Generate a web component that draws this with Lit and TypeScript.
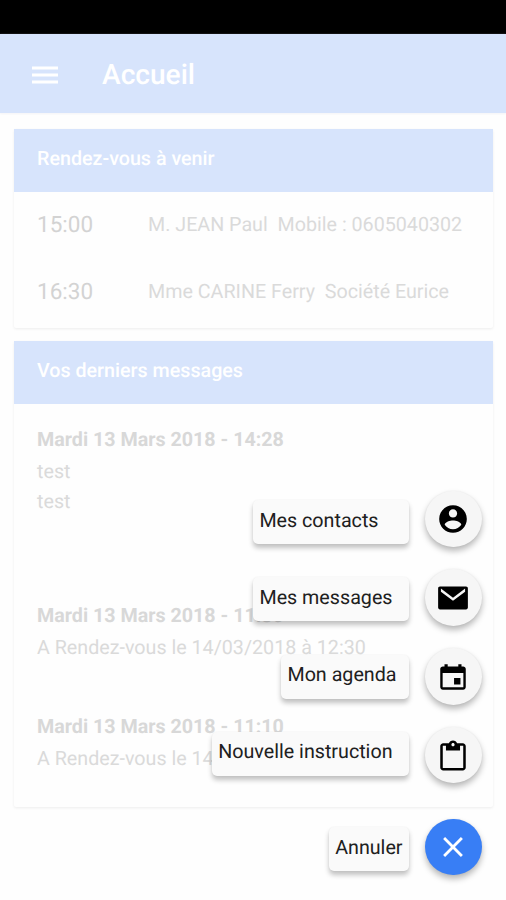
import { LitElement, html, css, svg } from "lit";
import { customElement } from "lit/decorators.js";
import { classMap } from "lit/directives/class-map.js";

const icons = {
  contact: svg`<path d="M256 48C140.6 48 48 141.600 48 256s92.600 208 208 208 208-93.600 208-208S371.400 48 256 48zm0 62.400c34.300 0 62.400 28.100 62.400 62.400s-28.100 62.400-62.400 62.400-62.400-28.100-62.400-62.400 28.100-62.400 62.400-62.400zm0 300.400c-51.600 0-97.900-26.700-124.800-67.100 1-41.600 83.200-64.400 124.800-64.400s123.800 22.800 124.800 64.400c-26.900 40.400-73.200 67.100-124.800 67.100z"/>`,
  mail: svg`<path d="M452 84H60C44 84 32 96 32 112v288c0 16 12 28 28 28h392c16 0 28-12 28-28V112c0-16-12-28-28-28zM438 160L256 298 74 160V114l182 138 182-138v46z"/>`,
  agenda: svg`<path d="M368 272h-96v96h96v-96zM336 64v32H176V64h-48v32h-24c-22 0-40 18-40 40v272c0 22 18 40 40 40h304c22 0 40-18 40-40V136c0-22-18-40-40-40h-24V64h-48zm76 348H100V194h312v218z"/>`,
  clipboard: svg`<path d="M403 64h-85.400C310 42.200 285.500 24 256 24s-54 18.200-61.600 40H109c-24.700 0-45 20.300-45 45v322c0 24.800 20.300 45 45 45h294c24.700 0 45-20.200 45-45V109c0-24.700-20.300-45-45-45zM256 62c13.200 0 24 10.700 24 24s-10.800 24-24 24-24-10.700-24-24 10.800-24 24-24zm154 376H102V102h48v72h212v-72h48v336z"/>`,
  close: svg`<path d="M405 136.798L375.202 107 256 226.202 136.798 107 107 136.798 226.202 256 107 375.202 136.798 405 256 285.798 375.202 405 405 375.202 285.798 256z"/>`,
  menu: svg`<path d="M60 384h392v-44H60V384zm0-106h392v-44H60v44zM60 128v44h392v-44H60z"/>`,
};
const icon = (shape: unknown) => html`<svg viewBox="0 0 512 512">${shape}</svg>`;

const meetings = [
  { time: "15:00", who: "M. JEAN Paul\u00a0 Mobile : 0605040302" },
  { time: "16:30", who: "Mme CARINE Ferry\u00a0 Société Eurice" },
];
const messages = [
  { date: "Mardi 13 Mars 2018 - 14:28", lines: ["test", "test"] },
  { date: "Mardi 13 Mars 2018 - 11:30", lines: ["A Rendez-vous le 14/03/2018 à 12:30"] },
  { date: "Mardi 13 Mars 2018 - 11:10", lines: ["A Rendez-vous le 14/03/2018 à 12:30"] },
];
const actions = [
  { label: "Mes contacts", shape: icons.contact, wide: true },
  { label: "Mes messages", shape: icons.mail },
  { label: "Mon agenda", shape: icons.agenda, tight: true },
  { label: "Nouvelle instruction", shape: icons.clipboard },
];

@customElement("app-root")
export class AppRoot extends LitElement {
  static styles = css`
    :host {
      display: block;
      position: relative;
      box-sizing: border-box;
      height: 900px;
      overflow: hidden;
      background: #fefefe;
      font-family: Roboto, sans-serif;
      font-size: 19.7px;
      line-height: 30px;
      color: #dadada;
      text-rendering: geometricPrecision;
      white-space: nowrap;
    }
    svg { display: block; width: 34px; height: 34px; fill: currentColor; }
    .status { height: 34px; background: #000; }
    .bar {
      display: flex;
      align-items: center;
      gap: 40px;
      height: 79px;
      padding-left: 28px;
      background: #d7e4fc;
      color: #fff;
      box-shadow: 0 1px 2px #f3f3f6;
    }
    .bar svg { margin-top: 2px; }
    .title { font-size: 28.1px; font-weight: 500; padding-top: 2px; }
    .content { display: flex; flex-direction: column; gap: 13px; padding: 16px 13px 0 14px; }
    .card { border-radius: 2px; background: #fefefe; box-shadow: 0 1px 3px #ededed; }
    .head {
      box-sizing: border-box;
      height: 63px;
      padding: 15px 23px;
      background: #d7e4fc;
      color: #fff;
      font-weight: 500;
    }
    .meetings { height: 136px; }
    .meeting { display: flex; height: 67.4px; padding: 17.5px 23px 0; box-sizing: border-box; }
    .time { width: 111px; font-size: 22.5px; color: #d3d3d3; }
    .messages { height: 403px; box-sizing: border-box; padding: 21px 23px 0; }
    .message { height: 111px; }
    .message:first-child { height: 176px; }
    .date { font-weight: 700; margin-bottom: 2px; color: #d8d8d8; }
    .actions {
      position: absolute;
      right: 24.5px;
      top: 490.5px;
      display: flex;
      gap: 16.4px;
      color: #202020;
    }
    .labels, .buttons { display: flex; flex-direction: column; align-items: flex-end; }
    .labels { gap: 33.3px; padding-top: 9.5px; }
    .buttons { gap: 22.2px; }
    .label {
      box-sizing: border-box;
      height: 44px;
      padding: 5.6px 16px 0 6px;
      border-radius: 5px;
      background: #fafafa;
      box-shadow: 0 4px 5px rgba(0, 0, 0, 0.24), 0 0 2px rgba(0, 0, 0, 0.06);
    }
    .label.wide { padding-right: 30px; }
    .label.tight { padding-right: 12px; }
    .label.cancel { padding-right: 6px; margin-top: 18px; }
    .button {
      display: grid;
      place-items: center;
      width: 56.6px;
      height: 56.6px;
      border-radius: 50%;
      background: #f6f6f6;
      color: #000;
      box-shadow: 0 4px 6px rgba(0, 0, 0, 0.28), 0 0 2px rgba(0, 0, 0, 0.06);
    }
    .button svg { margin-top: 1px; }
    .button.cancel { margin-top: 13px; background: #387ef5; color: #fff; }
    .button.cancel svg { margin-top: 0; }
  `;

  render() {
    return html`
      <div class="status"></div>
      <header class="bar">${icon(icons.menu)}<span class="title">Accueil</span></header>
      <main class="content">
        <section class="card">
          <div class="head">Rendez-vous à venir</div>
          <div class="meetings">
            ${meetings.map((m) => html`<div class="meeting"><span class="time">${m.time}</span><span>${m.who}</span></div>`)}
          </div>
        </section>
        <section class="card">
          <div class="head">Vos derniers messages</div>
          <div class="messages">
            ${messages.map((m) => html`<div class="message">
              <div class="date">${m.date}</div>
              ${m.lines.map((line) => html`<div>${line}</div>`)}
            </div>`)}
          </div>
        </section>
      </main>
      <div class="actions">
        <div class="labels">
          ${actions.map((a) => html`<div class=${classMap({ label: true, wide: !!a.wide, tight: !!a.tight })}>${a.label}</div>`)}
          <div class="label cancel">Annuler</div>
        </div>
        <div class="buttons">
          ${actions.map((a) => html`<div class="button">${icon(a.shape)}</div>`)}
          <div class="button cancel">${icon(icons.close)}</div>
        </div>
      </div>
    `;
  }
}
